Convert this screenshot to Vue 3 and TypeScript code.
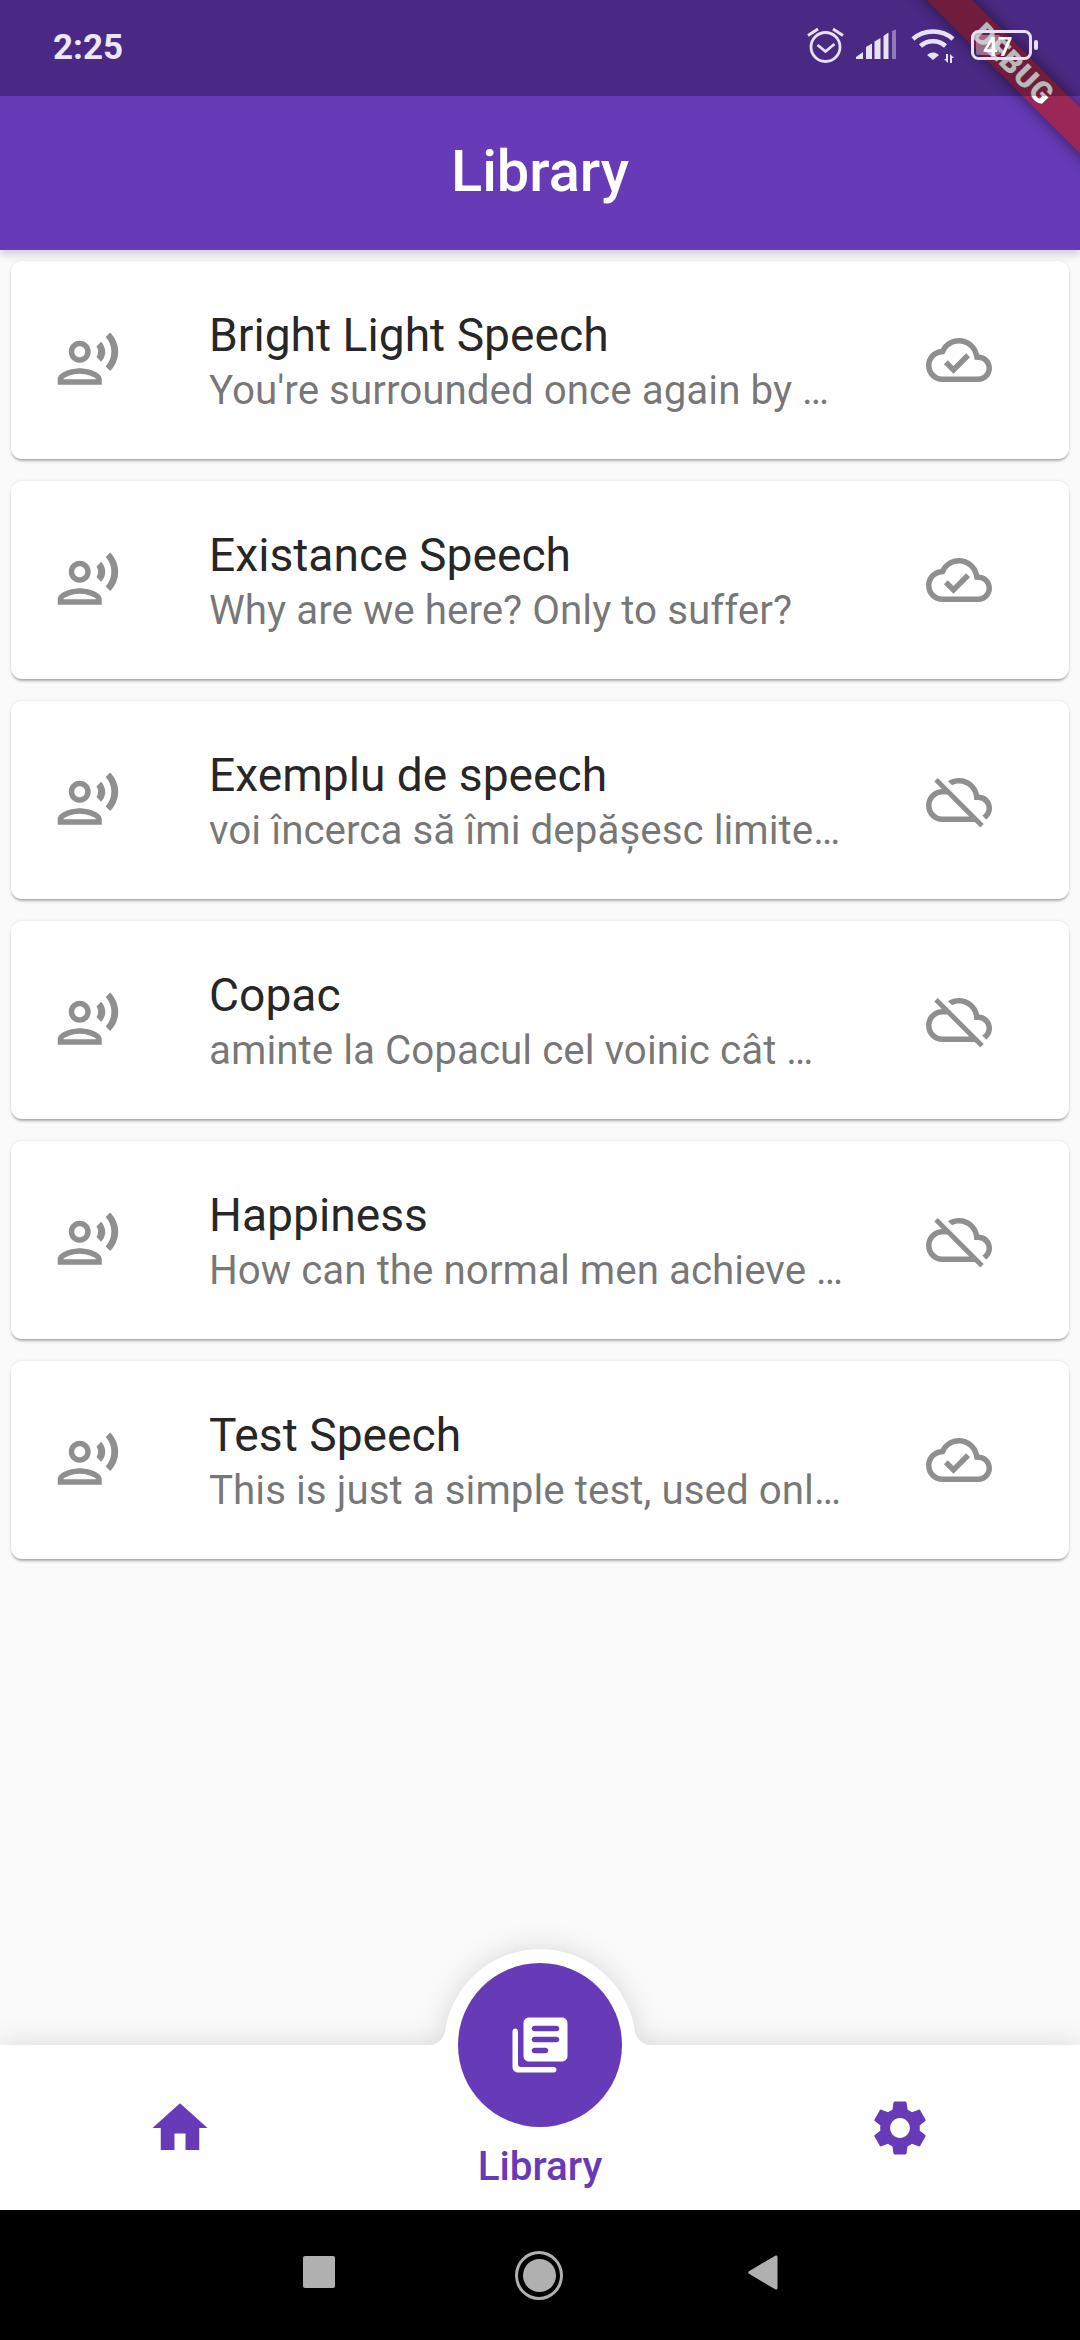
<script setup lang="ts">
interface Speech {
  title: string;
  excerpt: string;
  synced: boolean;
}

const speeches: Speech[] = [
  { title: "Bright Light Speech", excerpt: "You're surrounded once again by …", synced: true },
  { title: "Existance Speech", excerpt: "Why are we here? Only to suffer?", synced: true },
  { title: "Exemplu de speech", excerpt: "voi încerca să îmi depășesc limite…", synced: false },
  { title: "Copac", excerpt: "aminte la Copacul cel voinic cât …", synced: false },
  { title: "Happiness", excerpt: "How can the normal men achieve …", synced: false },
  { title: "Test Speech", excerpt: "This is just a simple test, used onl…", synced: true },
];

const VOICE =
  "M9 13c2.21 0 4-1.79 4-4s-1.79-4-4-4-4 1.79-4 4 1.79 4 4 4zm0-6c1.1 0 2 .9 2 2s-.9 2-2 2-2-.9-2-2 .9-2 2-2zm0 8c-2.67 0-8 1.34-8 4v2h16v-2c0-2.66-5.33-4-8-4zm-6 4c.22-.72 3.31-2 6-2 2.7 0 5.8 1.29 6 2H3zM15.08 7.05c.84 1.18.84 2.71 0 3.89l1.68 1.69c2.02-2.02 2.02-5.07 0-7.27l-1.68 1.69zM20.07 2l-1.63 1.63c2.77 3.02 2.77 7.56 0 10.74L20.07 16c3.9-3.89 3.91-9.95 0-14z";
const CLOUD_DONE =
  "M19.35 10.04C18.67 6.59 15.64 4 12 4 9.11 4 6.6 5.64 5.35 8.04 2.34 8.36 0 10.91 0 14c0 3.31 2.69 6 6 6h13c2.76 0 5-2.24 5-5 0-2.64-2.05-4.78-4.65-4.96zM19 18H6c-2.21 0-4-1.79-4-4 0-2.05 1.53-3.76 3.56-3.97l1.07-.11.5-.95C8.08 7.14 9.94 6 12 6c2.62 0 4.88 1.86 5.39 4.43l.3 1.5 1.53.11c1.56.1 2.78 1.41 2.78 2.96 0 1.65-1.35 3-3 3zm-9-3.82l-2.09-2.09L6.5 13.5 10 17l6.01-6.01-1.41-1.41z";
const CLOUD_OFF =
  "M19.35 10.04C18.67 6.59 15.64 4 12 4c-1.48 0-2.85.43-4.01 1.17l1.46 1.46C10.21 6.23 11.08 6 12 6c3.04 0 5.5 2.46 5.5 5.5v.5H19c1.66 0 3 1.34 3 3 0 1.13-.64 2.11-1.56 2.62l1.45 1.45C23.16 18.16 24 16.68 24 15c0-2.64-2.05-4.78-4.65-4.96zM3 5.27l2.75 2.74C2.56 8.15 0 10.77 0 14c0 3.31 2.69 6 6 6h11.73l2 2L21 20.73 4.27 4 3 5.27zM7.73 10l8 8H6c-2.21 0-4-1.79-4-4s1.79-4 4-4h1.73z";
</script>

<template>
  <div class="page">
    <header class="header">
      <div class="status">
        <span class="time">2:25</span>
        <svg class="status-icons" width="240" height="96" viewBox="0 0 240 96">
          <g fill="none" stroke="#e8e0f4" stroke-width="2.8">
            <circle cx="25.5" cy="47" r="14.5" />
            <path d="M8 35.5l10-6.5M33 29l10 6.5" stroke-width="3" />
            <path d="M17.5 45l8 6.5 9-7.5" />
          </g>
          <g fill="#e8e0f4">
            <path d="M56 59v-2l7-5v7zM66 59V47l6-3.5V59zM74.500 59V41.500l6-3.500V59zM83.500 59V36l5-3.500V59z" />
            <path d="M92 59V31l4-1.500V59z" opacity="0.45" />
          </g>
          <g fill="none" stroke="#e8e0f4" stroke-width="4.500">
            <path d="M113 39c11-10 29-10 40 0M120.500 46c7-6.500 18-6.500 25 0" />
          </g>
          <path d="M133 52.500c-3 0-5 1.500-6 2.500l6 5 6-5c-1-1-3-2.500-6-2.500z" fill="#e8e0f4" />
          <path d="M146 54h2v9l-4-4h2zM150 63v-9l4 4h-2v5z" fill="#e8e0f4" />
          <rect x="172.500" y="31.500" width="58" height="27" rx="6" fill="none" stroke="#e8e0f4" stroke-width="3" />
          <rect x="176" y="35" width="24" height="20" rx="2" fill="#e8e0f4" opacity="0.4" />
          <rect x="234" y="40" width="4" height="10" rx="2" fill="#e8e0f4" />
        </svg>
        <span class="battery-level">47</span>
      </div>
      <h1 class="title">Library</h1>
      <div class="banner">DEBUG</div>
    </header>

    <main class="list">
      <article v-for="speech in speeches" :key="speech.title" class="card">
        <div class="leading">
          <svg class="icon" viewBox="0 0 24 24"><path :d="VOICE" /></svg>
        </div>
        <div class="text">
          <div class="speech-title">{{ speech.title }}</div>
          <div class="speech-excerpt">{{ speech.excerpt }}</div>
        </div>
        <div class="trailing">
          <svg class="icon" viewBox="0 0 24 24"><path :d="speech.synced ? CLOUD_DONE : CLOUD_OFF" /></svg>
        </div>
      </article>
    </main>

    <nav class="bottom">
      <svg class="bottom-shape" width="1080" height="280" viewBox="0 0 1080 280">
        <path d="M-20 115H428A16 16 0 0 0 445.200 100A96 96 0 0 1 634.800 100A16 16 0 0 0 652 115H1100V300H-20Z" fill="#fff" />
      </svg>
      <div class="tab">
        <svg class="tab-icon" viewBox="0 0 24 24"><path d="M10 20v-6h4v6h5v-8h3L12 3 2 12h3v8z" /></svg>
      </div>
      <div class="tab tab-active">
        <div class="fab">
          <svg class="fab-icon" viewBox="0 0 24 24">
            <path d="M3 6c-.55 0-1 .45-1 1v13c0 1.100.9 2 2 2h13c.55 0 1-.45 1-1s-.45-1-1-1H5c-.55 0-1-.45-1-1V7c0-.55-.45-1-1-1zm17-4H8c-1.100 0-2 .9-2 2v12c0 1.100.9 2 2 2h12c1.100 0 2-.9 2-2V4c0-1.100-.9-2-2-2zm-2 9h-8c-.55 0-1-.45-1-1s.45-1 1-1h8c.55 0 1 .45 1 1s-.45 1-1 1zm-4 4h-4c-.55 0-1-.45-1-1s.45-1 1-1h4c.55 0 1 .45 1 1s-.45 1-1 1zm4-8h-8c-.55 0-1-.45-1-1s.45-1 1-1h8c.55 0 1 .45 1 1s-.45 1-1 1z" />
          </svg>
        </div>
        <span class="tab-label">Library</span>
      </div>
      <div class="tab">
        <svg class="tab-icon" viewBox="0 0 24 24">
          <path d="M19.14 12.94c.04-.3.06-.61.06-.94 0-.32-.02-.64-.07-.94l2.03-1.58c.18-.14.23-.41.12-.61l-1.92-3.32c-.12-.22-.37-.29-.59-.22l-2.39.96c-.5-.38-1.03-.7-1.62-.94l-.36-2.54c-.04-.24-.24-.41-.48-.41h-3.84c-.24 0-.43.17-.47.41l-.36 2.54c-.59.24-1.13.57-1.62.94l-2.39-.96c-.22-.08-.47 0-.59.22L2.74 8.87c-.12.21-.08.47.12.61l2.03 1.58c-.05.3-.09.63-.09.94s.02.64.07.94l-2.03 1.58c-.18.14-.23.41-.12.61l1.92 3.32c.12.22.37.29.59.22l2.39-.96c.5.38 1.03.7 1.62.94l.36 2.54c.05.24.24.41.48.41h3.84c.24 0 .44-.17.47-.41l.36-2.54c.59-.24 1.13-.56 1.62-.94l2.39.96c.22.08.47 0 .59-.22l1.92-3.32c.12-.22.07-.47-.12-.61l-2.01-1.58zM12 15.6c-1.98 0-3.6-1.62-3.6-3.6s1.62-3.6 3.6-3.6 3.6 1.62 3.6 3.6-1.62 3.6-3.6 3.6z" />
        </svg>
      </div>
    </nav>

    <footer class="system-nav">
      <span class="sys-square"></span>
      <span class="sys-home"><span class="sys-home-dot"></span></span>
      <svg class="sys-back" width="32" height="37" viewBox="0 0 32 38" preserveAspectRatio="none">
        <path d="M29 1.500a1.500 1.500 0 0 1 1.500 1.500v32a1.500 1.500 0 0 1-2.300 1.300L2 20.300a1.500 1.500 0 0 1 0-2.600L28.200 1.700z" />
      </svg>
    </footer>
  </div>
</template>

<style>
html,
body {
  margin: 0;
  background: #fafafa;
}
</style>

<style scoped>
.page {
  position: relative;
  display: flex;
  flex-direction: column;
  width: 1080px;
  height: 2340px;
  overflow: hidden;
  background: #fafafa;
  font-family: Roboto, "Liberation Sans", sans-serif;
}

/***** header *****/
.header {
  position: relative;
  z-index: 2;
  flex: none;
  background: #673ab7;
  box-shadow: 0 5px 8px rgba(0, 0, 0, 0.16);
}

.status {
  position: relative;
  z-index: 3;
  display: flex;
  align-items: center;
  height: 96px;
  padding-left: 53px;
  background: rgba(0, 0, 0, 0.28);
}

.time {
  padding-bottom: 2px;
  color: #ece6f6;
  font-size: 35px;
  font-weight: 700;
}

.status-icons {
  position: absolute;
  top: 0;
  left: 800px;
}

.battery-level {
  position: absolute;
  top: 31px;
  left: 983px;
  color: #fff;
  font-size: 26px;
  font-weight: 500;
  line-height: 32px;
}

.title {
  margin: 0;
  height: 154px;
  color: #fff;
  font-size: 57.75px;
  font-weight: 500;
  line-height: 150px;
  text-align: center;
}

.banner {
  position: absolute;
  z-index: 2;
  top: 49px;
  left: 815px;
  box-sizing: border-box;
  width: 400px;
  height: 33px;
  padding-right: 4px;
  background: rgba(183, 28, 28, 0.63);
  box-shadow: 0 0 16px rgba(0, 0, 0, 0.5);
  color: #fff;
  font-size: 30px;
  font-weight: 900;
  letter-spacing: 1px;
  line-height: 33px;
  text-align: center;
  transform: rotate(45deg);
}

/***** list *****/
.list {
  flex: 1;
  display: flex;
  flex-direction: column;
  gap: 22px;
  padding: 11px 11px 0;
}

.card {
  display: flex;
  align-items: center;
  flex: none;
  height: 198px;
  padding: 0 44px;
  border-radius: 11px;
  background: #fff;
  box-shadow: 0 3px 3px -1px rgba(0, 0, 0, 0.3), 0 0 3px rgba(0, 0, 0, 0.12);
}

.leading {
  flex: none;
  width: 154px;
  display: flex;
}

.icon {
  width: 66px;
  height: 66px;
  fill: #8f8f8f;
}

.text {
  flex: 1;
  min-width: 0;
  padding-top: 5px;
  padding-right: 44px;
}

.speech-title {
  color: rgba(0, 0, 0, 0.87);
  font-size: 46.2px;
  line-height: 56px;
  white-space: nowrap;
}

.speech-excerpt {
  color: rgba(0, 0, 0, 0.54);
  font-size: 40.4px;
  line-height: 56px;
  white-space: nowrap;
}

.trailing {
  flex: none;
  width: 132px;
  display: flex;
  justify-content: center;
}

/***** bottom nav *****/
.bottom {
  position: relative;
  z-index: 1;
  flex: none;
  display: grid;
  grid-template-columns: repeat(3, 1fr);
  height: 165px;
}

.bottom-shape {
  position: absolute;
  left: 0;
  bottom: 0;
  filter: drop-shadow(0 0 14px rgba(0, 0, 0, 0.14));
}

.tab {
  position: relative;
  display: flex;
  justify-content: center;
  padding-top: 50px;
}

.tab-icon {
  width: 66px;
  height: 66px;
  fill: #673ab7;
}

.tab-active {
  padding-top: 98px;
}

.fab {
  position: absolute;
  top: -82px;
  left: 98px;
  display: flex;
  align-items: center;
  justify-content: center;
  width: 164px;
  height: 164px;
  border-radius: 50%;
  background: #673ab7;
}

.fab-icon {
  width: 66px;
  height: 66px;
  fill: #fff;
}

.tab-label {
  color: #673ab7;
  font-size: 40.4px;
  font-weight: 500;
  line-height: 48px;
}

/***** android nav *****/
.system-nav {
  flex: none;
  position: relative;
  z-index: 1;
  display: flex;
  align-items: center;
  height: 130px;
  padding-left: 303px;
  background: #000;
}

.sys-square {
  width: 32px;
  height: 32px;
  margin-bottom: 6px;
  border-radius: 2px;
  background: #b0b0b0;
}

.sys-home {
  display: flex;
  align-items: center;
  justify-content: center;
  box-sizing: border-box;
  width: 48px;
  height: 49px;
  margin-left: 180px;
  border: 3.5px solid #b0b0b0;
  border-radius: 50%;
}

.sys-home-dot {
  width: 33px;
  height: 33px;
  border-radius: 50%;
  background: #b0b0b0;
}

.sys-back {
  margin-left: 184px;
  margin-bottom: 6px;
  fill: #b0b0b0;
}
</style>
